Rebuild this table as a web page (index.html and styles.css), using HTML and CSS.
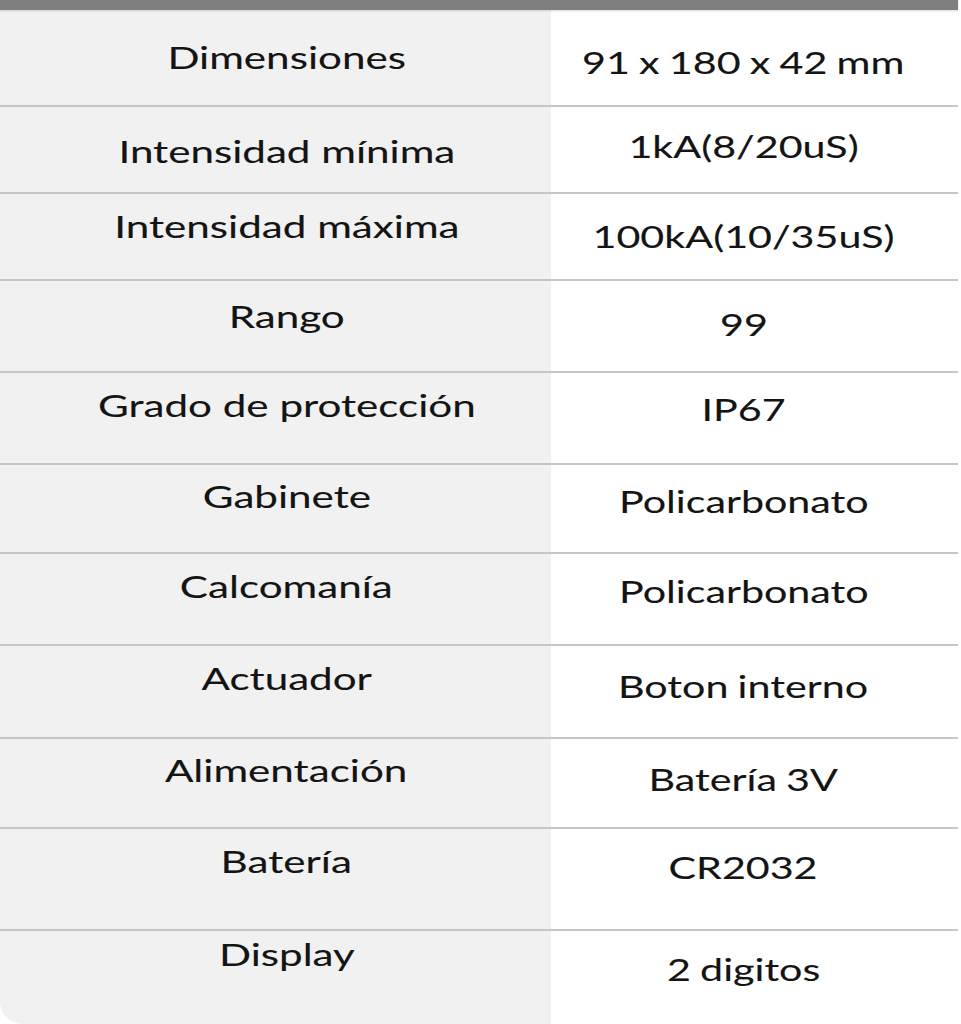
FILE: index.html
```html
<!DOCTYPE html>
<html lang="es">
<head>
<meta charset="utf-8">
<title>Especificaciones</title>
<link rel="stylesheet" href="styles.css">
</head>
<body>
<div class="specs">
  <div class="topbar"></div>
  <div class="row"><div class="k"><span>Dimensiones</span></div><div class="v"><span>91 x 180 x 42 mm</span></div></div>
  <div class="row"><div class="k"><span>Intensidad mínima</span></div><div class="v"><span>1kA(8/20uS)</span></div></div>
  <div class="row"><div class="k"><span>Intensidad máxima</span></div><div class="v"><span>100kA(10/35uS)</span></div></div>
  <div class="row"><div class="k"><span>Rango</span></div><div class="v"><span>99</span></div></div>
  <div class="row"><div class="k"><span>Grado de protección</span></div><div class="v"><span>IP67</span></div></div>
  <div class="row"><div class="k"><span>Gabinete</span></div><div class="v"><span>Policarbonato</span></div></div>
  <div class="row"><div class="k"><span>Calcomanía</span></div><div class="v"><span>Policarbonato</span></div></div>
  <div class="row"><div class="k"><span>Actuador</span></div><div class="v"><span>Boton interno</span></div></div>
  <div class="row"><div class="k"><span>Alimentación</span></div><div class="v"><span>Batería 3V</span></div></div>
  <div class="row"><div class="k"><span>Batería</span></div><div class="v"><span>CR2032</span></div></div>
  <div class="row"><div class="k"><span>Display</span></div><div class="v"><span>2 digitos</span></div></div>
</div>
</body>
</html>
```
FILE: styles.css
```css
html, body {
  margin: 0;
  padding: 0;
  background: #ffffff;
}
body {
  font-family: Lato, "Liberation Sans", sans-serif;
  color: #141414;
  overflow: hidden;
}
.specs {
  width: 961px;
  height: 1024px;
  display: flex;
  flex-direction: column;
  background: linear-gradient(to right, #f1f1f1 0, #f1f1f1 551px, #ffffff 551px);
  border-bottom-left-radius: 22px;
  overflow: hidden;
}
.topbar {
  height: 10px;
  width: 958px;
  background: #7f7f7f;
  box-shadow: 0 1px 2px rgba(0,0,0,0.15);
  flex: none;
}
.row {
  display: grid;
  grid-template-columns: 551px 1fr;
  box-sizing: border-box;
  width: 958px;
  border-bottom: 2px solid #c6c6c6;
  flex: none;
  font-size: 31px;
  line-height: 36px;
  -webkit-text-stroke: 0.1px #141414;
}
.k {
  text-align: center;
  padding-left: 22px;
}
.v {
  text-align: center;
  padding-right: 22px;
}
.k span, .v span {
  display: inline-block;
  white-space: nowrap;
}
.k span {
  transform: scaleX(1.36);
}
.v span {
  transform: scaleX(1.33);
  word-spacing: -1px;
}
.row:nth-child(2)  { height: 97px; }
.row:nth-child(3)  { height: 87px; }
.row:nth-child(4)  { height: 87px; }
.row:nth-child(5)  { height: 92px; }
.row:nth-child(6)  { height: 92px; }
.row:nth-child(7)  { height: 89px; }
.row:nth-child(8)  { height: 92px; }
.row:nth-child(9)  { height: 93px; }
.row:nth-child(10) { height: 90px; }
.row:nth-child(11) { height: 102px; }
.row:nth-child(12) { height: 93px; border-bottom: none; }

.row:nth-child(2)  .k { padding-top: 29px; } .row:nth-child(2)  .v { padding-top: 34px; }
.row:nth-child(3)  .k { padding-top: 26px; } .row:nth-child(3)  .v { padding-top: 21px; }
.row:nth-child(4)  .k { padding-top: 14px; } .row:nth-child(4)  .v { padding-top: 24px; }
.row:nth-child(5)  .k { padding-top: 17px; } .row:nth-child(5)  .v { padding-top: 25px; }
.row:nth-child(6)  .k { padding-top: 14px; } .row:nth-child(6)  .v { padding-top: 18px; }
.row:nth-child(7)  .k { padding-top: 13px; } .row:nth-child(7)  .v { padding-top: 18px; }
.row:nth-child(8)  .k { padding-top: 14px; } .row:nth-child(8)  .v { padding-top: 19px; }
.row:nth-child(9)  .k { padding-top: 14px; } .row:nth-child(9)  .v { padding-top: 22px; }
.row:nth-child(10) .k { padding-top: 13px; } .row:nth-child(10) .v { padding-top: 22px; }
.row:nth-child(11) .k { padding-top: 14px; } .row:nth-child(11) .v { padding-top: 20px; }
.row:nth-child(12) .k { padding-top: 5px; }  .row:nth-child(12) .v { padding-top: 20px; }
```
